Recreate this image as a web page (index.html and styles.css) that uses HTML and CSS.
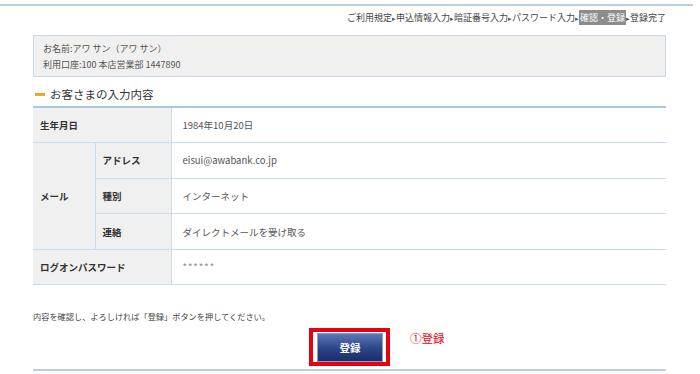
FILE: index.html
```html
<!DOCTYPE html>
<html lang="ja">
<head>
  <meta charset="UTF-8" />
  <title>確認・登録</title>
  <link rel="stylesheet" href="styles.css">
</head>
<body>
  <div class="top-line"></div>
  <div class="page">
    <!-- 手続きの流れ -->
    <div class="steps">
      ご利用規定<span class="arrow">▸</span>申込情報入力<span class="arrow">▸</span>暗証番号入力<span class="arrow">▸</span>パスワード入力<span class="arrow">▸</span><span class="current">確認・登録</span><span class="arrow">▸</span>登録完了
    </div>

    <!-- 口座情報 -->
    <div class="account">
      <p>お名前:アワ サン（アワ サン）</p>
      <p>利用口座:100 本店営業部 1447890</p>
    </div>

    <h2 class="sec-title">お客さまの入力内容</h2>
    <table class="confirm">
      <tr>
        <th colspan="2">生年月日</th>
        <td>1984年10月20日</td>
      </tr>
      <tr>
        <th rowspan="3">メール</th>
        <th class="sub">アドレス</th>
        <td>eisui@awabank.co.jp</td>
      </tr>
      <tr>
        <th class="sub">種別</th>
        <td>インターネット</td>
      </tr>
      <tr>
        <th class="sub">連絡</th>
        <td>ダイレクトメールを受け取る</td>
      </tr>
      <tr>
        <th colspan="2">ログオンパスワード</th>
        <td class="secret">******</td>
      </tr>
    </table>

    <p class="note">内容を確認し、よろしければ「登録」ボタンを押してください。</p>

    <div class="actions">
      <div class="mark">
        <button type="button" class="submit-btn">登録</button>
        <span class="mark-label">①登録</span>
      </div>
    </div>
    <div class="bottom-line"></div>
  </div>
</body>
</html>
```

FILE: styles.css
```css
* { margin: 0; padding: 0; box-sizing: border-box; }
body {
  font-family: "Noto Sans CJK JP", "Noto Sans", sans-serif;
  background-color: #fff;
  color: #333;
  width: 700px;
}
.top-line {
  width: 693px;
  height: 6px;
  border-bottom: 2px solid #bccfe2;
}
.page {
  width: 633px;
  margin-left: 33px;
}
/* 手続きの流れ */
.steps {
  margin-top: 5px;
  height: 14px;
  line-height: 14px;
  font-size: 9px;
  text-align: right;
  color: #444;
  white-space: nowrap;
}
.steps .arrow {
  font-size: 7px;
  color: #555;
}
.steps .current {
  background-color: #8c8c8c;
  color: #fff;
  padding: 1px 1px;
}
/* 口座情報 */
.account {
  margin-top: 10px;
  height: 42px;
  padding: 5px 9px 3px;
  background-color: #f0f0f0;
  border: 1px solid #ccd8e4;
}
.account p {
  font-size: 9px;
  line-height: 16px;
  color: #555;
}
/* 見出し */
.sec-title {
  margin-top: 9px;
  height: 16px;
  line-height: 16px;
  font-size: 11.5px;
  font-weight: normal;
  color: #333;
  display: flex;
  align-items: center;
  gap: 5px;
  padding-left: 2px;
}
.sec-title::before {
  content: "";
  width: 10px;
  height: 3px;
  background-color: #f0a42c;
}
/* 入力内容テーブル */
.confirm {
  margin-top: 4px;
  width: 100%;
  border-collapse: collapse;
  border-top: 2px solid #a9c8e0;
}
.confirm th,
.confirm td {
  height: 35.6px;
  font-size: 9.5px;
  text-align: left;
  vertical-align: middle;
  border-bottom: 1px solid #c9dcec;
}
.confirm th {
  width: 138px;
  background-color: #f0f0f0;
  font-weight: bold;
  color: #333;
  padding-left: 7px;
  border-right: 1px solid #c9dcec;
}
.confirm th[rowspan] {
  width: 62px;
}
.confirm th.sub {
  width: 76px;
}
.confirm td {
  padding-left: 11px;
  color: #555;
}
.confirm td.secret {
  color: #888;
  letter-spacing: 1px;
}
/* 下部 */
.note {
  margin-top: 24px;
  font-size: 8.2px;
  line-height: 14px;
  color: #444;
}
.actions {
  margin-top: 5px;
  display: flex;
  justify-content: center;
}
.mark {
  position: relative;
  width: 81px;
  height: 38px;
  padding: 1px 3px 0 4px;
  border: 4px solid #e60012;
}
.submit-btn {
  width: 66px;
  height: 29px;
  border: 1px solid #8d9cc8;
  background: linear-gradient(#5a77b6, #2c4488 55%, #1b2d6c);
  color: #fff;
  font-family: "Noto Sans CJK JP", sans-serif;
  font-weight: bold;
  font-size: 10.5px;
  cursor: pointer;
}
.mark-label {
  position: absolute;
  left: 97px;
  top: -2px;
  white-space: nowrap;
  font-size: 11.5px;
  line-height: 16px;
  color: #e60012;
}
.bottom-line {
  margin-top: 3px;
  height: 2px;
  background-color: #bccfe2;
}
```
